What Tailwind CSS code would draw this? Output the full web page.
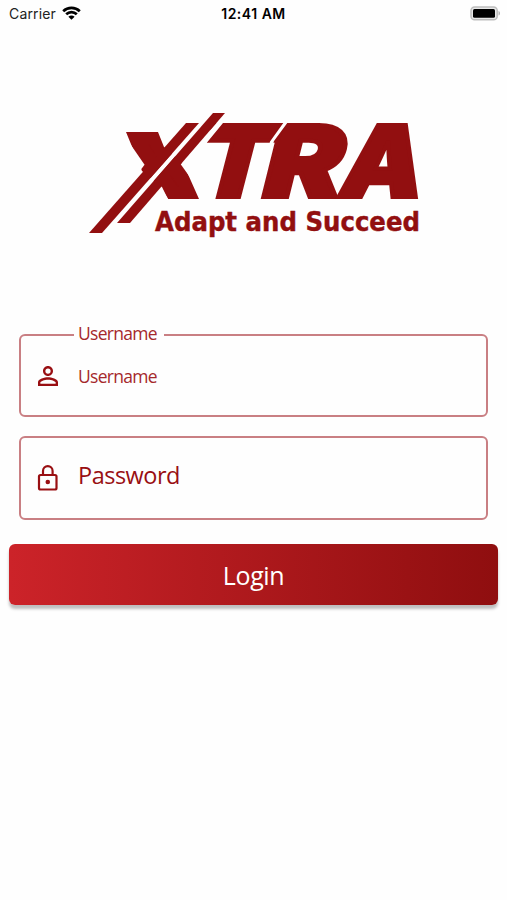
<!DOCTYPE html>
<html lang="en">
<head>
    <meta charset="UTF-8">
    <meta name="viewport" content="width=device-width, initial-scale=1.0">
    <title>Xtra Login</title>
    <script src="https://cdn.jsdelivr.net/npm/@tailwindcss/browser@4"></script>
</head>
<body class="bg-[#fefefe] h-screen overflow-hidden font-['Open_Sans',sans-serif]">
    <div class="h-full flex flex-col">
        <!-- Status Bar -->
        <header class="h-7 shrink-0 grid grid-cols-3 items-center pl-[9px] pr-[6px] font-['Inter',sans-serif] text-[14px] leading-7 text-[#222]">
            <div class="flex items-center gap-[6px]">
                <span class="tracking-[0.15px]">Carrier</span>
                <svg class="w-[19px] h-[14px] -mt-[2px]" viewBox="0 0 19 14" fill="none" stroke="#000" stroke-width="2.7">
                    <path d="M1.2 5.2C5.8 .8 13.2 .8 17.8 5.2"/>
                    <path d="M4.2 8.3C7.2 5.4 11.8 5.4 14.8 8.3"/>
                    <path d="M9.5 13.8L6.4 10.8C8.1 9.2 10.9 9.2 12.6 10.8Z" fill="#000" stroke="none"/>
                </svg>
            </div>
            <div class="text-center font-semibold text-black whitespace-nowrap tracking-[0.5px] -ml-[3px]">12:41 AM</div>
            <svg class="w-[31px] h-[15px] justify-self-end -mt-[2px]" viewBox="0 0 31 15">
                <rect x="1" y="1" width="26.2" height="12.8" rx="3.6" fill="#e8e8e8" stroke="#bdbdbd" stroke-width="1.5"/>
                <rect x="3" y="3" width="22" height="8.8" rx="1.5" fill="#000"/>
                <path d="M28.5 5c2 .6 2 4 0 4.600z" fill="#b5b5b5"/>
            </svg>
        </header>

        <!-- Logo -->
        <svg class="w-[340px] h-[160px] mt-[50px] ml-[85px] shrink-0 overflow-visible" viewBox="85 78 340 160" fill="#920f10">
            <defs>
                <clipPath id="arm">
                    <path d="M126 132H158L164 147L183 163L199 199H168L162 187L142 171Z"/>
                </clipPath>
            </defs>
            <g font-family="Inter, sans-serif" font-weight="900" font-size="99" stroke="#920f10" stroke-width="4">
                <g clip-path="url(#arm)">
                    <text x="130" y="194" font-size="78" textLength="65" lengthAdjust="spacingAndGlyphs" stroke-width="14">X</text>
                </g>
                <text transform="translate(192 197) skewX(-14.5)" textLength="73" lengthAdjust="spacingAndGlyphs">T</text>
                <text transform="translate(258 197) skewX(-14)" textLength="79" lengthAdjust="spacingAndGlyphs">R</text>
                <text transform="translate(336 197) skewX(-12)" textLength="82" lengthAdjust="spacingAndGlyphs">A</text>
            </g>
            <!-- gap between T and R -->
            <path d="M284 122L270 141.500L268 150H271L274 141L288 122Z" fill="#fefefe"/>
            <!-- slashes through the wordmark -->
            <path d="M102 233L199 123L213 113L117 223Z" fill="#fefefe"/>
            <path d="M225 113L192 151L200 151L223 123V113Z" fill="#fefefe"/>
            <path d="M89 233H102L199 123H186Z"/>
            <path d="M117 223H130L225 113H213Z"/>
            <text x="155" y="231" font-family="DejaVu Sans Condensed, DejaVu Sans, sans-serif" font-stretch="condensed" font-weight="700" font-size="26.5" textLength="265" lengthAdjust="spacingAndGlyphs" stroke="#920f10" stroke-width=".4">Adapt and Succeed</text>
        </svg>

        <!-- Login Form -->
        <form class="mt-[96px] px-[9px] flex flex-col text-[#a5282b]">
            <div class="relative mx-[10px] h-[83px] border-2 border-[#c97f83] rounded-[6px] flex items-center pl-[12px]">
                <span class="absolute left-[53px] -top-[15px] w-[90px] pl-1 bg-[#fefefe] text-[17.5px] leading-6 tracking-[-0.7px]">Username</span>
                <svg class="w-[30px] h-[30px]" viewBox="0 0 24 24" fill="#990f12">
                    <path d="M12 5.900a2.100 2.100 0 1 1 0 4.200 2.100 2.100 0 0 1 0-4.200m0 9c2.970 0 6.100 1.460 6.100 2.100v1.100H5.900V17c0-.64 3.130-2.100 6.100-2.100M12 4C9.790 4 8 5.790 8 8s1.790 4 4 4 4-1.790 4-4-1.790-4-4-4zm0 9c-2.670 0-8 1.340-8 4v3h16v-3c0-2.660-5.330-4-8-4z"/>
                </svg>
                <span class="ml-[15px] text-[17.5px] leading-6 tracking-[-0.7px]">Username</span>
            </div>
            <div class="mx-[10px] mt-[19px] h-[84px] border-2 border-[#c97f83] rounded-[6px] flex items-center pl-[14px]">
                <svg class="w-[26px] h-[29px]" viewBox="0 0 26 29" fill="none" stroke="#990f12" stroke-width="2.2">
                    <rect x="4" y="11" width="17.5" height="14.5" rx="1.5"/>
                    <path d="M8 11V7a4.800 4.800 0 0 1 9.600 0V11"/>
                    <circle cx="12.8" cy="18" r="2.3" fill="#990f12" stroke="none"/>
                </svg>
                <span class="ml-[17px] -mt-[7px] text-[23.5px] leading-8 tracking-[-0.5px] text-[#990f12]">Password</span>
            </div>
            <button type="button" class="mt-[24px] h-[61px] rounded-[6px] bg-linear-to-r from-[#cc2329] to-[#8f0e0f] text-white text-[25px] tracking-[-0.4px] pt-[2px] shadow-[0_4px_3px_rgba(0,0,0,0.25)]">Login</button>
        </form>
    </div>
</body>
</html>
